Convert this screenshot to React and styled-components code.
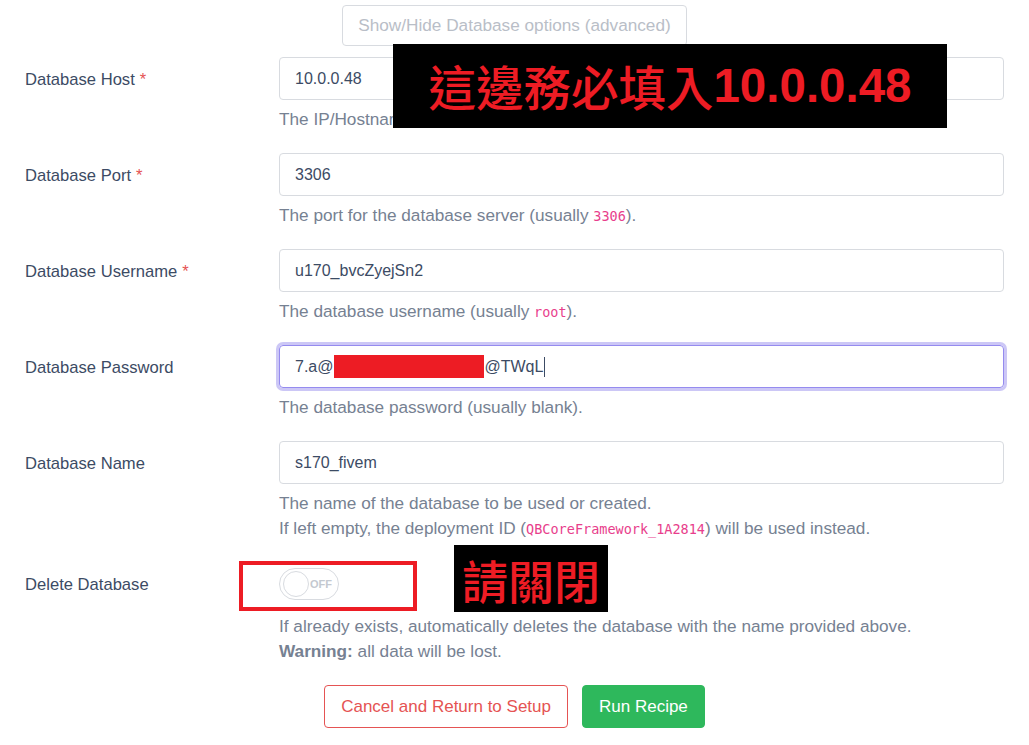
import React from 'react';
import styled, { createGlobalStyle } from 'styled-components';

const GlobalStyle = createGlobalStyle`
  html, body {
    margin: 0;
    padding: 0;
    background: #fff;
  }
  body {
    font-family: "Liberation Sans", Arial, sans-serif;
    color: #3c4b64;
  }
`;

const Page = styled.div`
  position: relative;
  width: 1029px;
  height: 745px;
  padding: 5px 25px 0;
  box-sizing: border-box;
  overflow: hidden;
`;

const TopBar = styled.div`
  display: flex;
  justify-content: center;
  margin-bottom: 11px;
`;

const GhostButton = styled.button`
  height: 41px;
  padding: 0 15px;
  font: 17.2px "Liberation Sans", Arial, sans-serif;
  color: #b9bec7;
  background: #fff;
  border: 1px solid #d8dbe0;
  border-radius: 4px;
`;

const Row = styled.div`
  display: grid;
  grid-template-columns: 254px 1fr;
  margin-bottom: ${(p) => p.$gap ?? 21}px;
`;

const Label = styled.div`
  height: 43px;
  padding-top: 3px;
  box-sizing: border-box;
  display: flex;
  align-items: center;
  font-size: 16.6px;
  color: #3c4b64;
`;

const Req = styled.span`
  color: #e55353;
  margin-left: 5px;
`;

const Input = styled.div`
  height: 43px;
  box-sizing: border-box;
  display: flex;
  align-items: center;
  padding: 0 15px;
  font-size: 16px;
  color: #3c4b64;
  border: 1px solid ${(p) => (p.$focus ? '#958bef' : '#d8dbe0')};
  border-radius: 4px;
  box-shadow: ${(p) => (p.$focus ? '0 0 0 3px rgba(50, 31, 219, 0.25)' : 'none')};
`;

const Redact = styled.span`
  display: inline-block;
  width: 150px;
  height: 23px;
  margin-left: 1px;
  background: #ed1c24;
`;

const Caret = styled.span`
  display: inline-block;
  width: 1px;
  height: 20px;
  background: #3c4b64;
  margin-left: 1px;
`;

const Help = styled.div`
  margin-top: ${(p) => p.$top ?? 7}px;
  font-size: 17.2px;
  line-height: 25px;
  color: #768192;
`;

const Code = styled.code`
  font-family: "DejaVu Sans Mono", "Liberation Mono", monospace;
  font-size: 13.5px;
  line-height: 0;
  color: #e83e8c;
`;

const ToggleWrap = styled.div`
  height: 43px;
  display: flex;
  align-items: center;
`;

const Switch = styled.div`
  position: relative;
  width: 60px;
  height: 32px;
  box-sizing: border-box;
  border: 1px solid #d8dbe0;
  border-radius: 16px;
  background: #fff;
`;

const Knob = styled.span`
  position: absolute;
  left: 3px;
  top: 2px;
  width: 26px;
  height: 26px;
  box-sizing: border-box;
  border-radius: 50%;
  border: 1px solid #d8dbe0;
  background: #fff;
`;

const SwitchText = styled.span`
  position: absolute;
  right: 6px;
  top: 9px;
  font-size: 11px;
  font-weight: bold;
  color: #c4c9d0;
`;

const Actions = styled.div`
  display: flex;
  justify-content: center;
  gap: 14px;
`;

const Button = styled.button`
  height: 43px;
  padding: 0 16px;
  font: 17px "Liberation Sans", Arial, sans-serif;
  border-radius: 4px;
  border: 1px solid ${(p) => (p.$variant === 'danger' ? '#e55353' : '#2eb85c')};
  color: ${(p) => (p.$variant === 'danger' ? '#e55353' : '#fff')};
  background: ${(p) => (p.$variant === 'danger' ? '#fff' : '#2eb85c')};
`;

const Note = styled.div`
  position: absolute;
  left: ${(p) => p.$x}px;
  top: ${(p) => p.$y}px;
  width: ${(p) => p.$w}px;
  height: ${(p) => p.$h}px;
  background: #000;
  color: #ed1c24;
  display: flex;
  align-items: center;
  justify-content: center;
  font-family: "Noto Sans CJK TC", "Noto Sans CJK SC", sans-serif;
  font-size: ${(p) => p.$size}px;
  font-weight: 500;
  line-height: 1;
`;

const Digits = styled.span`
  font-family: "Liberation Sans", Arial, sans-serif;
  font-weight: bold;
`;

const Frame = styled.div`
  position: absolute;
  left: 239px;
  top: 561px;
  width: 178px;
  height: 50px;
  box-sizing: border-box;
  border: 4px solid #ed1c24;
`;

const fields = [
  { label: 'Database Host', req: true, value: '10.0.0.48', help: <>The IP/Hostname of the database server (usually localhost).</> },
  { label: 'Database Port', req: true, value: '3306', help: <>The port for the database server (usually <Code>3306</Code>).</> },
  { label: 'Database Username', req: true, value: 'u170_bvcZyejSn2', help: <>The database username (usually <Code>root</Code>).</> },
];

export default function App() {
  return (
    <>
      <GlobalStyle />
      <Page>
        <TopBar>
          <GhostButton>Show/Hide Database options (advanced)</GhostButton>
        </TopBar>

        {fields.map((f) => (
          <Row key={f.label}>
            <Label>
              {f.label}
              {f.req && <Req>*</Req>}
            </Label>
            <div>
              <Input>{f.value}</Input>
              <Help>{f.help}</Help>
            </div>
          </Row>
        ))}

        <Row>
          <Label>Database Password</Label>
          <div>
            <Input $focus>
              7.a@<Redact />@TWqL<Caret />
            </Input>
            <Help>The database password (usually blank).</Help>
          </div>
        </Row>

        <Row>
          <Label>Database Name</Label>
          <div>
            <Input>s170_fivem</Input>
            <Help>
              The name of the database to be used or created.
              <br />
              If left empty, the deployment ID (<Code>QBCoreFramework_1A2814</Code>) will be used instead.
            </Help>
          </div>
        </Row>

        <Row>
          <Label>Delete Database</Label>
          <div>
            <ToggleWrap>
              <Switch>
                <Knob />
                <SwitchText>OFF</SwitchText>
              </Switch>
            </ToggleWrap>
            <Help $top={9}>
              If already exists, automatically deletes the database with the name provided above.
              <br />
              <b>Warning:</b> all data will be lost.
            </Help>
          </div>
        </Row>

        <Actions>
          <Button $variant="danger">Cancel and Return to Setup</Button>
          <Button>Run Recipe</Button>
        </Actions>

        <Note $x={393} $y={44} $w={554} $h={84} $size={47.5}>
          這邊務必填入<Digits>10.0.0.48</Digits>
        </Note>
        <Frame />
        <Note $x={454} $y={545} $w={154} $h={67} $size={46}>
          請關閉
        </Note>
      </Page>
    </>
  );
}
